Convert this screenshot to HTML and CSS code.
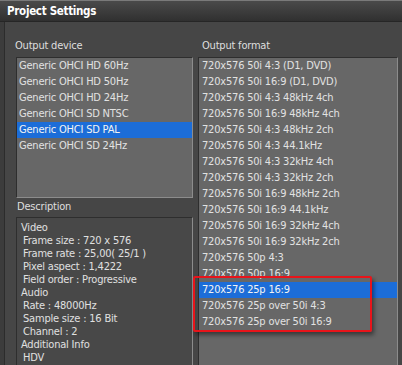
FILE: index.html
```html
<!DOCTYPE html>
<html lang="en">
<head>
    <meta charset="UTF-8">
    <meta name="viewport" content="width=device-width, initial-scale=1.0">
    <title>Project Settings</title>
    <link rel="stylesheet" href="styles.css">
</head>
<body>

    <div class="window">
        <div class="titlebar">Project Settings</div>

        <div class="panel">
            <div class="col col-left">
                <div class="label device-label">Output device</div>
                <ul class="listbox device-list">
                    <li>Generic OHCI HD 60Hz</li>
                    <li>Generic OHCI HD 50Hz</li>
                    <li>Generic OHCI HD 24Hz</li>
                    <li>Generic OHCI SD NTSC</li>
                    <li class="selected">Generic OHCI SD PAL</li>
                    <li>Generic OHCI SD 24Hz</li>
                </ul>

                <div class="label desc-label">Description</div>
                <div class="desc">
                    <div>Video</div>
                    <div class="sub">Frame size : 720 x 576</div>
                    <div class="sub">Frame rate : 25,00( 25/1 )</div>
                    <div class="sub">Pixel aspect : 1,4222</div>
                    <div class="sub">Field order : Progressive</div>
                    <div>Audio</div>
                    <div class="sub">Rate : 48000Hz</div>
                    <div class="sub">Sample size : 16 Bit</div>
                    <div class="sub">Channel : 2</div>
                    <div>Additional Info</div>
                    <div class="sub">HDV</div>
                </div>
            </div>

            <div class="col col-right">
                <div class="label format-label">Output format</div>
                <ul class="listbox format-list">
                    <li>720x576 50i 4:3 (D1, DVD)</li>
                    <li>720x576 50i 16:9 (D1, DVD)</li>
                    <li>720x576 50i 4:3 48kHz 4ch</li>
                    <li>720x576 50i 16:9 48kHz 4ch</li>
                    <li>720x576 50i 4:3 48kHz 2ch</li>
                    <li>720x576 50i 4:3 44.1kHz</li>
                    <li>720x576 50i 4:3 32kHz 4ch</li>
                    <li>720x576 50i 4:3 32kHz 2ch</li>
                    <li>720x576 50i 16:9 48kHz 2ch</li>
                    <li>720x576 50i 16:9 44.1kHz</li>
                    <li>720x576 50i 16:9 32kHz 4ch</li>
                    <li>720x576 50i 16:9 32kHz 2ch</li>
                    <li>720x576 50p 4:3</li>
                    <li>720x576 50p 16:9</li>
                    <li class="selected">720x576 25p 16:9</li>
                    <li>720x576 25p over 50i 4:3</li>
                    <li>720x576 25p over 50i 16:9</li>
                    <!-- red callout drawn over the last three entries -->
                    <div class="callout"></div>
                </ul>
            </div>
        </div>
    </div>

</body>
</html>
```

FILE: styles.css
```css
/* Dark dialog styling */
body {
    margin: 0;
    padding: 0;
    background-color: #3c3c3c;
    font-family: "DejaVu Sans Condensed", "DejaVu Sans", sans-serif;
    font-size: 11px;
    letter-spacing: -0.2px;
    color: #dcdcdc;
    overflow: hidden;
}
.window {
    height: 365px;
    display: flex;
    flex-direction: column;
    overflow: hidden;
}
.titlebar {
    height: 20px;
    line-height: 21px;
    padding-left: 7px;
    font-weight: bold;
    font-size: 11.5px;
    letter-spacing: -0.3px;
    color: #fff;
    border-top: 1px solid #7a7a7a;
    border-bottom: 1px solid #262626;
    background: linear-gradient(#4a4a4a, #303030);
}
.panel {
    flex: 1;
    min-height: 0;
    display: flex;
    gap: 5px;
    margin-left: 4px;
    padding-left: 11px;
    border-left: 1px solid #2c2c2c;
    background-color: #464646;
    overflow: hidden;
}
.col {
    display: flex;
    flex-direction: column;
}
.col-left {
    width: 177px;
}
.col-right {
    width: 200px;
}
.label {
    line-height: 16px;
    padding: 16px 0 3px 0;
    color: #dedede;
}
.device-label {
    margin-left: -1px;
}
.format-label {
    padding-left: 4px;
}
.desc-label {
    padding: 1px 0 2px 1px;
}
.listbox {
    list-style: none;
    margin: 0;
    padding: 0;
    background-color: #676767;
    border-top: 1px solid #2e2e2e;
    border-left: 1px solid #2e2e2e;
    border-right: 1px solid #8c8c8c;
    border-bottom: 1px solid #8c8c8c;
}
.listbox li {
    height: 16px;
    line-height: 16px;
    white-space: nowrap;
    color: #e2e2e2;
}
.listbox li.selected {
    background-color: #1c6dd8;
    color: #f4f4f4;
}
.device-list {
    height: 139px;
}
.device-list li {
    padding-left: 2px;
}
.format-list {
    position: relative;
    flex: 1;
    margin-bottom: -4px;
}
.format-list li {
    padding-left: 3px;
}
.callout {
    position: absolute;
    left: -6px;
    top: 218px;
    width: 179px;
    height: 56px;
    box-sizing: border-box;
    border: 2px solid #e8141a;
    border-radius: 2px;
    box-shadow: 2px 3px 4px rgba(0, 0, 0, 0.45);
}
.desc {
    flex: 1;
    margin-bottom: -4px;
    padding: 3px 0 0 4px;
    line-height: 13px;
    background-color: #484848;
    border-top: 1px solid #2e2e2e;
    border-left: 1px solid #2e2e2e;
    border-right: 1px solid #8c8c8c;
    color: #e0e0e0;
}
.desc .sub {
    padding-left: 2px;
}
```
